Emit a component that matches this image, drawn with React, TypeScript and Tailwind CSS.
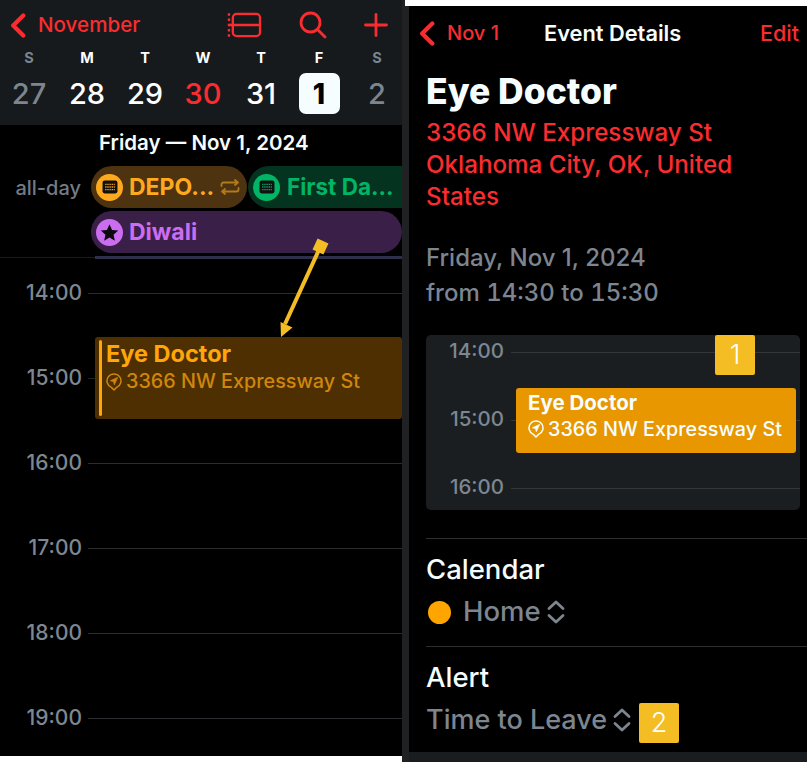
const font = { fontFamily: 'Inter, "Liberation Sans", sans-serif' }

function Chevron({ className }: { className: string }) {
    return (
        <svg className={className} viewBox="0 0 16 26" fill="none" stroke="#fb2c2f" strokeWidth="4.4" strokeLinecap="round" strokeLinejoin="round">
            <path d="M13.5 2.5 3 13l10.5 10.5" />
        </svg>
    )
}

function UpDown({ className }: { className: string }) {
    return (
        <svg className={className} viewBox="0 0 18 24" fill="none" stroke="#7d858f" strokeWidth="2.8" strokeLinecap="round" strokeLinejoin="round">
            <path d="M2 8.5 9 2l7 6.5M2 15.5 9 22l7-6.5" />
        </svg>
    )
}

function Pin({ color, className }: { color: string; className: string }) {
    return (
        <svg className={className} viewBox="0 0 16 18" fill="none" stroke={color} strokeWidth="1.5" strokeLinejoin="round">
            <path d="M8 17 5.4 14.4A7 7 0 1 1 10.6 14.4Z" />
            <path d="M11.6 4.4 4.4 7.8l3.2.7.7 3.2Z" fill={color} strokeWidth="0.8" />
        </svg>
    )
}

function CalIcon({ bg, fg }: { bg: string; fg: string }) {
    return (
        <div className="flex h-[27px] w-[27px] shrink-0 items-center justify-center rounded-full" style={{ backgroundColor: bg }}>
            <svg className="h-[16px] w-[16px]" viewBox="0 0 15 15">
                <rect x="0.5" y="1.5" width="14" height="12" rx="2" fill="#111" />
                <path d="M3 5h9M3 7.5h9M3 10h9" stroke={fg} strokeWidth="1.2" strokeDasharray="1.2 0.8" />
            </svg>
        </div>
    )
}

function Badge({ n }: { n: number }) {
    return (
        <div className="flex h-10 w-10 items-center justify-center rounded-[2px] bg-[#f4bd23] text-[27px] font-light text-white">
            {n}
        </div>
    )
}

const days = [
    { l: 'S', d: '27', lc: 'text-[#7d858f]', dc: 'text-[#7d858f]' },
    { l: 'M', d: '28', lc: 'text-white', dc: 'text-white' },
    { l: 'T', d: '29', lc: 'text-white', dc: 'text-white' },
    { l: 'W', d: '30', lc: 'text-white', dc: 'text-[#fb2c2f]' },
    { l: 'T', d: '31', lc: 'text-white', dc: 'text-white' },
    { l: 'F', d: '1', lc: 'text-white', dc: 'text-black' },
    { l: 'S', d: '2', lc: 'text-[#7d858f]', dc: 'text-[#7d858f]' },
]

const hours = ['14:00', '15:00', '16:00', '17:00', '18:00', '19:00']

function LeftPanel() {
    return (
        <div className="flex h-[756px] w-[402px] flex-col overflow-hidden bg-black">
            <div className="h-[125px] shrink-0 bg-[#171a1d]">
                <div className="flex h-[50px] items-center pl-[10px]">
                    <Chevron className="h-[25px] w-[16px]" />
                    <span className="ml-[12px] text-[20.6px] font-medium text-[#fb2c2f]">November</span>
                    <svg className="ml-[87px] h-[26px] w-[35px]" viewBox="0 0 36 26" fill="none" stroke="#fb2c2f" strokeWidth="2.4">
                        <rect x="6" y="1.5" width="28" height="23" rx="4" />
                        <path d="M2 13h33" />
                        <path d="M2 1v24" strokeDasharray="2.4 3" />
                    </svg>
                    <svg className="ml-[37px] h-[28px] w-[28px]" viewBox="0 0 28 28" fill="none" stroke="#fb2c2f" strokeWidth="2.8" strokeLinecap="round">
                        <circle cx="11.5" cy="11.5" r="9.5" />
                        <path d="M19 19l7 7" />
                    </svg>
                    <svg className="ml-[37px] h-[24px] w-[24px]" viewBox="0 0 24 24" fill="none" stroke="#fb2c2f" strokeWidth="2.8" strokeLinecap="round">
                        <path d="M12 1.5v21M1.5 12h21" />
                    </svg>
                </div>
                <div className="grid w-[406px] grid-cols-[repeat(7,58px)]">
                    {days.map((day, i) => (
                        <div key={i} className="flex flex-col items-center">
                            <span className={`text-[14.5px] leading-[16px] font-bold ${day.lc}`}>{day.l}</span>
                            <div className="mt-[7px] flex h-[41px] w-[41px] items-center justify-center">
                                {day.d === '1' ? (
                                    <div className="flex h-[41px] w-[41px] items-center justify-center rounded-[7px] bg-[#f5fdff] text-[28px] font-extrabold text-black">
                                        1
                                    </div>
                                ) : (
                                    <span className={`text-[29px] font-medium ${day.dc}`}>{day.d}</span>
                                )}
                            </div>
                        </div>
                    ))}
                </div>
            </div>
            <div className="relative flex-1">
                <div className="pt-[6px] pl-[99px] text-[20.5px] leading-[24px] font-semibold text-[#f5fdff]">Friday — Nov 1, 2024</div>
                <div className="mt-[11px] flex">
                    <div className="w-[91px] pt-[10px] pr-[10px] text-right text-[20px] leading-[24px] font-medium text-[#737b86]">all-day</div>
                    <div className="flex flex-1 flex-col gap-[3px]">
                        <div className="flex gap-[1px]">
                            <div className="flex h-[42px] w-[156px] items-center rounded-full bg-[#4e3310] pl-[5px]">
                                <CalIcon bg="#ffa91f" fg="#ffa91f" />
                                <span className="ml-[6px] text-[23px] font-bold text-[#ffa91f]">DEPO...</span>
                                <svg className="ml-[6px] h-[16px] w-[20px]" viewBox="0 0 20 16" fill="none" stroke="#b07a1e" strokeWidth="1.8" strokeLinecap="round" strokeLinejoin="round">
                                    <path d="M1.5 7V5.5a2 2 0 0 1 2-2H18M15 1l3 2.5L15 6M18.5 9v1.5a2 2 0 0 1-2 2H2M5 10l-3 2.5L5 15" />
                                </svg>
                            </div>
                            <div className="flex h-[42px] flex-1 items-center rounded-l-full rounded-r-[21px] bg-[#04341f] pl-[5px]">
                                <CalIcon bg="#00b565" fg="#00b565" />
                                <span className="ml-[7px] text-[22.5px] font-bold whitespace-nowrap text-[#00b565]">First Da...</span>
                            </div>
                        </div>
                        <div className="flex h-[42px] items-center rounded-full bg-[#3a2049] pl-[5px]">
                            <div className="flex h-[27px] w-[27px] items-center justify-center rounded-full bg-[#cb6df0]">
                                <svg className="h-[19px] w-[19px]" viewBox="0 0 24 24" fill="#0b0b0b">
                                    <path d="M12 1.5l3.2 7.2 7.8.8-5.9 5.2 1.7 7.7L12 18.4l-6.8 4 1.7-7.7L1 9.5l7.8-.8z" />
                                </svg>
                            </div>
                            <span className="ml-[6px] text-[23px] font-bold text-[#cb6df0]">Diwali</span>
                        </div>
                    </div>
                </div>
                <div className="mt-[3px] flex h-[3px] items-center">
                    <div className="h-[1px] w-[95px] bg-[#191a1d]" />
                    <div className="h-[3px] flex-1 bg-[#2e2f4b]" />
                </div>
                <div className="mt-[21px]">
                    {hours.map((h, i) => (
                        <div key={h} className="flex h-[85px] items-start">
                            <div className="flex h-[26px] w-[82px] items-center justify-end text-[21px] font-medium text-[#7d8792]">{h}</div>
                            <div className={`mt-[13px] ml-[6px] h-[1px] flex-1 ${i === 1 ? 'bg-[#222]' : 'bg-[#2b2c30]'}`} />
                        </div>
                    ))}
                </div>
                {/* event block and arrow lie over the hour grid */}
                <div className="absolute top-[212px] left-[95px] flex h-[82px] w-[307px] rounded-[3px] bg-[#4d2f02] py-[3px] pl-[4px]">
                    <div className="h-[76px] w-[3px] rounded-full bg-[#ffa60a]" />
                    <div className="pl-[4px]">
                        <div className="text-[23.5px] leading-[28px] font-bold text-[#ffa60a]">Eye Doctor</div>
                        <div className="flex items-center">
                            <Pin color="#cf860c" className="h-[18px] w-[16px]" />
                            <span className="ml-[4px] text-[19.8px] leading-[27px] font-medium whitespace-nowrap text-[#cf860c]">3366 NW Expressway St</span>
                        </div>
                    </div>
                </div>
                <svg className="absolute top-[113px] left-[275px] h-[100px] w-[60px]" viewBox="0 0 60 100">
                    <rect x="39.5" y="2.5" width="12" height="12" fill="#f4bd23" transform="rotate(25 45.5 8.5)" />
                    <path d="M45.5 8.5 10 86" stroke="#f4bd23" strokeWidth="4" />
                    <path d="M6 99l-0.5-15 12 5.5z" fill="#f4bd23" />
                </svg>
            </div>
            <div className="h-[14px] shrink-0 bg-[#1a1d1f]" />
        </div>
    )
}

function RightPanel() {
    return (
        <div className="flex h-[762px] w-[398px] flex-col">
            <div className="-ml-[4px] h-[6px] shrink-0 bg-white" />
            <div className="flex-1 bg-black">
                <div className="flex h-[54px] items-center pr-[8px] pl-[10px]">
                    <Chevron className="h-[25px] w-[16px]" />
                    <span className="ml-[12px] text-[20px] font-medium text-[#fb2c2f]">Nov 1</span>
                    <span className="ml-[45px] flex-1 text-[21.8px] font-semibold text-[#f5fdff]">Event Details</span>
                    <span className="text-[21.5px] font-medium text-[#fb2c2f]">Edit</span>
                </div>
                <div className="pl-[17px]">
                    <div className="mt-[10px] text-[35.5px] leading-[44px] font-extrabold text-[#f5fdff]">Eye Doctor</div>
                    <div className="mt-[3px] text-[24.2px] leading-[32px] font-medium text-[#fb2c2f]">
                        3366 NW Expressway St
                        <br />
                        Oklahoma City, OK, United
                        <br />
                        States
                    </div>
                    <div className="mt-[27px] text-[24px] leading-[35px] font-medium text-[#7d858f]">
                        Friday, Nov 1, 2024
                        <br />
                        <span className="tabular-nums">from 14:30 to 15:30</span>
                    </div>
                    <div className="relative mt-[25px] h-[175px] w-[374px] overflow-hidden rounded-[5px] bg-[#1b1e21] pt-[3px]">
                        {['14:00', '15:00', '16:00'].map(h => (
                            <div key={h} className="flex h-[68px] items-start">
                                <div className="flex h-[26px] w-[78px] items-center justify-end text-[20.5px] font-medium text-[#7d8792]">{h}</div>
                                <div className="mt-[14px] ml-[7px] h-[1px] flex-1 bg-[#34373a]" />
                            </div>
                        ))}
                        <div className="absolute top-0 left-[289px]">
                            <Badge n={1} />
                        </div>
                        <div className="absolute top-[53px] left-[90px] h-[65px] w-[280px] rounded-[3px] bg-[#e89700] pt-[2px] pl-[12px] whitespace-nowrap text-[#f5fdff]">
                            <div className="text-[20.5px] leading-[26px] font-bold">Eye Doctor</div>
                            <div className="flex items-center">
                                <Pin color="#f5fdff" className="h-[18px] w-[16px]" />
                                <span className="ml-[4px] text-[19.8px] leading-[26px] font-medium">3366 NW Expressway St</span>
                            </div>
                        </div>
                    </div>
                    <div className="mt-[28px] h-[1px] bg-[#2d3033]" />
                    <div className="mt-[13px] text-[27.5px] leading-[34px] font-medium text-[#f5fdff]">Calendar</div>
                    <div className="mt-[9px] flex h-[34px] items-center">
                        <div className="ml-[2px] h-[23px] w-[23px] rounded-full bg-[#ffa500]" />
                        <span className="ml-[12px] text-[27.5px] font-medium text-[#7d858f]">Home</span>
                        <UpDown className="ml-[6px] h-[24px] w-[18px]" />
                    </div>
                    <div className="mt-[17px] h-[1px] bg-[#2d3033]" />
                    <div className="mt-[13px] text-[27.5px] leading-[34px] font-medium text-[#f5fdff]">Alert</div>
                    <div className="mt-[6px] flex h-[40px] items-center">
                        <span className="text-[27px] font-medium text-[#7d858f]">Time to Leave</span>
                        <UpDown className="ml-[6px] h-[24px] w-[18px]" />
                        <div className="mt-[6px] ml-[8px]">
                            <Badge n={2} />
                        </div>
                    </div>
                </div>
            </div>
            <div className="h-[10px] shrink-0 bg-[#1a1d1f]" />
        </div>
    )
}

export default function App() {
    return (
        <div className="flex h-[762px] w-[807px] overflow-hidden bg-white" style={font}>
            <div className="flex h-[762px] w-[402px] flex-col bg-white">
                <LeftPanel />
            </div>
            <div className="h-[762px] w-[7px] bg-[#1f2123]" />
            <RightPanel />
        </div>
    )
}
